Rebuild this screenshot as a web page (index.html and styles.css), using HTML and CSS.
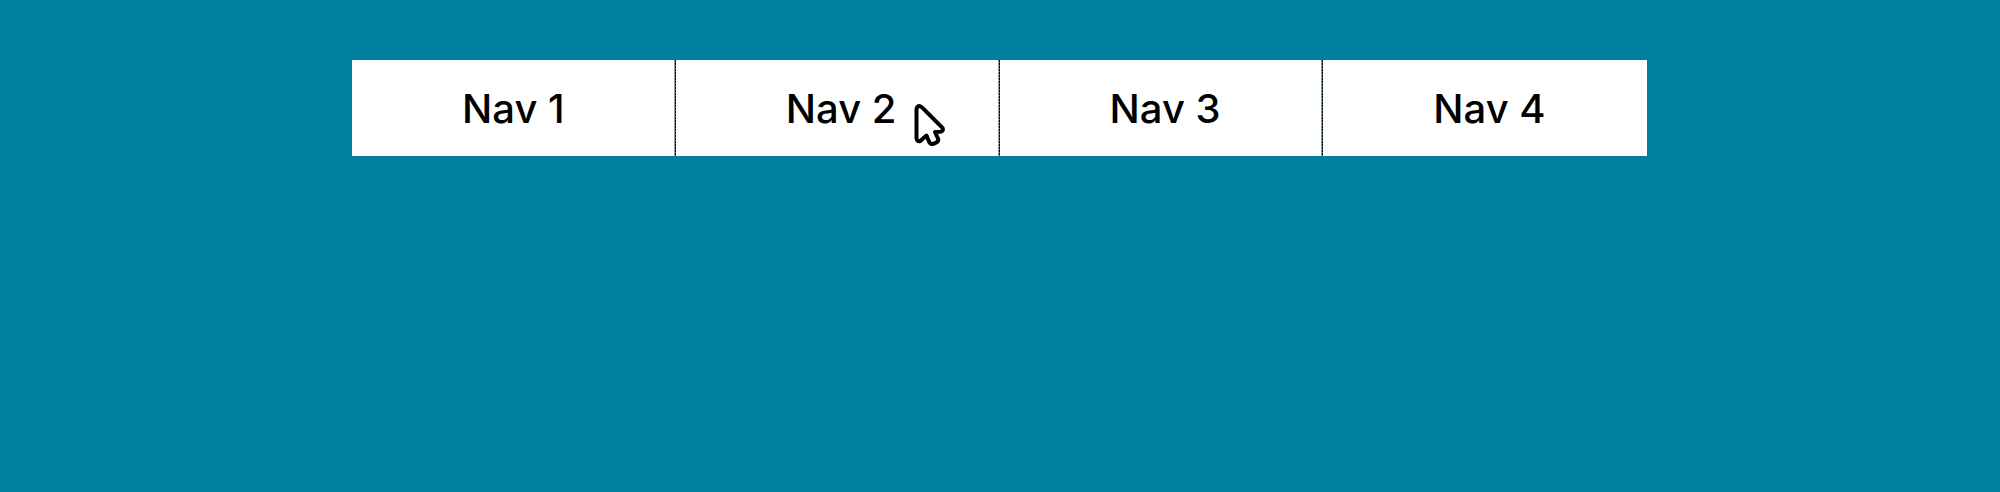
FILE: index.html
```html
<!DOCTYPE html>
<html lang="en">
<head>
<meta charset="utf-8">
<title>Navigation</title>
<meta name="viewport" content="width=device-width, initial-scale=1">
<link rel="stylesheet" href="styles.css">
</head>
<body>
<nav class="nav" aria-label="Main">
  <ul class="nav-list">
    <li class="nav-item"><a class="nav-link" href="#nav-1">Nav 1</a></li>
    <li class="nav-item"><a class="nav-link" href="#nav-2">Nav 2</a>
      <svg class="cursor" viewBox="0 0 34 44" aria-hidden="true"><path d="M4.500 6.500V35Q4.500 38.500 8 38.200L14.500 32.500L17 38.500Q18.300 41.800 21.500 40.800L24 39.700Q27 38.200 26 35.500L23 29L28.500 28.800Q31.800 28 30.500 24.800L10 4.300Q5.500 1 4.500 6.500Z"/></svg>
    </li>
    <li class="nav-item"><a class="nav-link" href="#nav-3">Nav 3</a></li>
    <li class="nav-item"><a class="nav-link" href="#nav-4">Nav 4</a></li>
  </ul>
</nav>
</body>
</html>
```

FILE: styles.css
```css
body {
  margin: 0;
  min-height: 100vh;
  background: #0080a0;
  color: #000;
  font-family: Inter, "Liberation Sans", sans-serif;
}

.nav {
  padding: 60px 353px 60px 352px;
}

.nav-list {
  display: grid;
  grid-template-columns: repeat(4, 1fr);
  margin: 0;
  padding: 0;
  list-style: none;
  background: #fff;
}

.nav-item {
  position: relative;
}

/* Two-pixel divider: a grey edge beside a black and teal dotted line */
.nav-item:not(:last-child) {
  background:
    repeating-linear-gradient(#000 0 2px, #40808c 2px 3px) right / 1px 100% no-repeat,
    linear-gradient(#999, #999) right / 2px 100% no-repeat;
}

.nav-link {
  display: block;
  padding: 25px 0 23px 34%;
  color: inherit;
  font-size: 40px;
  font-weight: 500;
  line-height: 48px;
  text-decoration: none;
}

.cursor {
  position: absolute;
  top: 43px;
  left: 236px;
  width: 34px;
  height: 44px;
  fill: #fff;
  stroke: #000;
  stroke-width: 4;
  stroke-linejoin: round;
}
```
